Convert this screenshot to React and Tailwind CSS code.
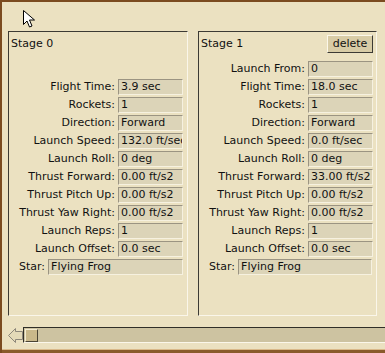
const font = { fontFamily: '"DejaVu Sans", Verdana, sans-serif' };

const stage0 = [
  null,
  ['Flight Time:', '3.9 sec'],
  ['Rockets:', '1'],
  ['Direction:', 'Forward'],
  ['Launch Speed:', '132.0 ft/sec'],
  ['Launch Roll:', '0 deg'],
  ['Thrust Forward:', '0.00 ft/s2'],
  ['Thrust Pitch Up:', '0.00 ft/s2'],
  ['Thrust Yaw Right:', '0.00 ft/s2'],
  ['Launch Reps:', '1'],
  ['Launch Offset:', '0.0 sec'],
];

const stage1 = [
  ['Launch From:', '0'],
  ['Flight Time:', '18.0 sec'],
  ['Rockets:', '1'],
  ['Direction:', 'Forward'],
  ['Launch Speed:', '0.0 ft/sec'],
  ['Launch Roll:', '0 deg'],
  ['Thrust Forward:', '33.00 ft/s2'],
  ['Thrust Pitch Up:', '0.00 ft/s2'],
  ['Thrust Yaw Right:', '0.00 ft/s2'],
  ['Launch Reps:', '1'],
  ['Launch Offset:', '0.0 sec'],
];

function Field({ value, className = '' }) {
  return (
    <div className={`h-[16px] border border-t-[#9b9482] border-l-[#9b9482] border-b-[#f6f1e0] border-r-[#f6f1e0] bg-[#dcd4b8] pl-[2px] leading-[14px] whitespace-nowrap overflow-hidden text-[#111] ${className}`}>
      {value}
    </div>
  );
}

function Row({ row }) {
  if (!row) return <div className="h-[18px]" />;
  const [label, value] = row;
  return (
    <div className="h-[18px] flex items-center">
      <div className="w-[106px] text-right whitespace-nowrap text-[#111]">{label}</div>
      <Field value={value} className="ml-[3px] w-[65px]" />
    </div>
  );
}

function Stage({ title, rows, width, canDelete }) {
  return (
    <div
      className={`${width} h-[285px] border border-t-[#3c3a34] border-l-[#3c3a34] border-b-[#faf6ea] border-r-[#faf6ea] flex flex-col`}
    >
      <div className="h-[28px] flex items-start pt-[3px] pl-[2px] pr-[3px]">
        <span className="leading-[18px] text-[#111]">{title}</span>
        <div className="flex-1" />
        {canDelete && (
          <button className="h-[18px] w-[46px] border border-t-[#fbf7ea] border-l-[#fbf7ea] border-b-[#3c3a34] border-r-[#3c3a34] bg-[#d8cca6] leading-[14px] text-[#111] text-center">
            delete
          </button>
        )}
      </div>
      {rows.map((r, i) => (
        <Row key={i} row={r} />
      ))}
      <div className="h-[18px] flex items-center pl-[10px] pr-[4px]">
        <span className="text-[#111]">Star:</span>
        <Field value="Flying Frog" className="ml-[3px] flex-1" />
      </div>
    </div>
  );
}

export default function App() {
  return (
    <div
      className="relative w-[385px] h-[353px] overflow-hidden bg-[#ebe1c1] border-t-2 border-l-2 border-[#7b4b20] text-[11px] flex flex-col"
      style={font}
    >
      {/* panels */}
      <div className="flex gap-[10px] pl-[6px] pt-[29px]">
        <Stage title="Stage 0" rows={stage0} width="w-[180px]" />
        <Stage title="Stage 1" rows={stage1} width="w-[179px]" canDelete />
      </div>

      {/* horizontal scrollbar */}
      <div className="flex items-start mt-[11px] pl-[6px]">
        <svg width="15" height="16" viewBox="0 0 15 16" className="mt-[1px]">
          <polygon
            points="0.5,7.5 7.5,0.5 7.5,3.5 14.5,3.5 14.5,11.5 7.5,11.5 7.5,14.5"
            fill="#e4dab8"
            stroke="#8d877a"
            strokeWidth="1"
          />
        </svg>
        <div className="flex-1 h-[16px] border-t border-l border-b border-t-[#302e28] border-l-[#302e28] border-b-[#fbf7ea] bg-[#cdc3a1] pl-[1px] pt-[1px]">
          <div className="w-[13px] h-[13px] border border-t-[#f4ecd2] border-l-[#f4ecd2] border-b-[#4a4434] border-r-[#4a4434] bg-[#c9b88a]" />
        </div>
      </div>

      <div className="flex-1" />
      <div className="h-[1px] bg-[#d9b98a]" />
      <div className="h-[3px] bg-[#8a5a2b]" />

      {/* mouse cursor */}
      <svg
        width="14"
        height="20"
        viewBox="0 0 14 20"
        className="absolute left-[20px] top-[7px]"
      >
        <path
          d="M1.5,1.5 L1.5,15.5 L5,12 L7.5,18 L10,17 L7.5,11 L12.5,11 Z"
          fill="#fff"
          stroke="#000"
          strokeWidth="1"
          strokeLinejoin="miter"
        />
      </svg>
    </div>
  );
}
